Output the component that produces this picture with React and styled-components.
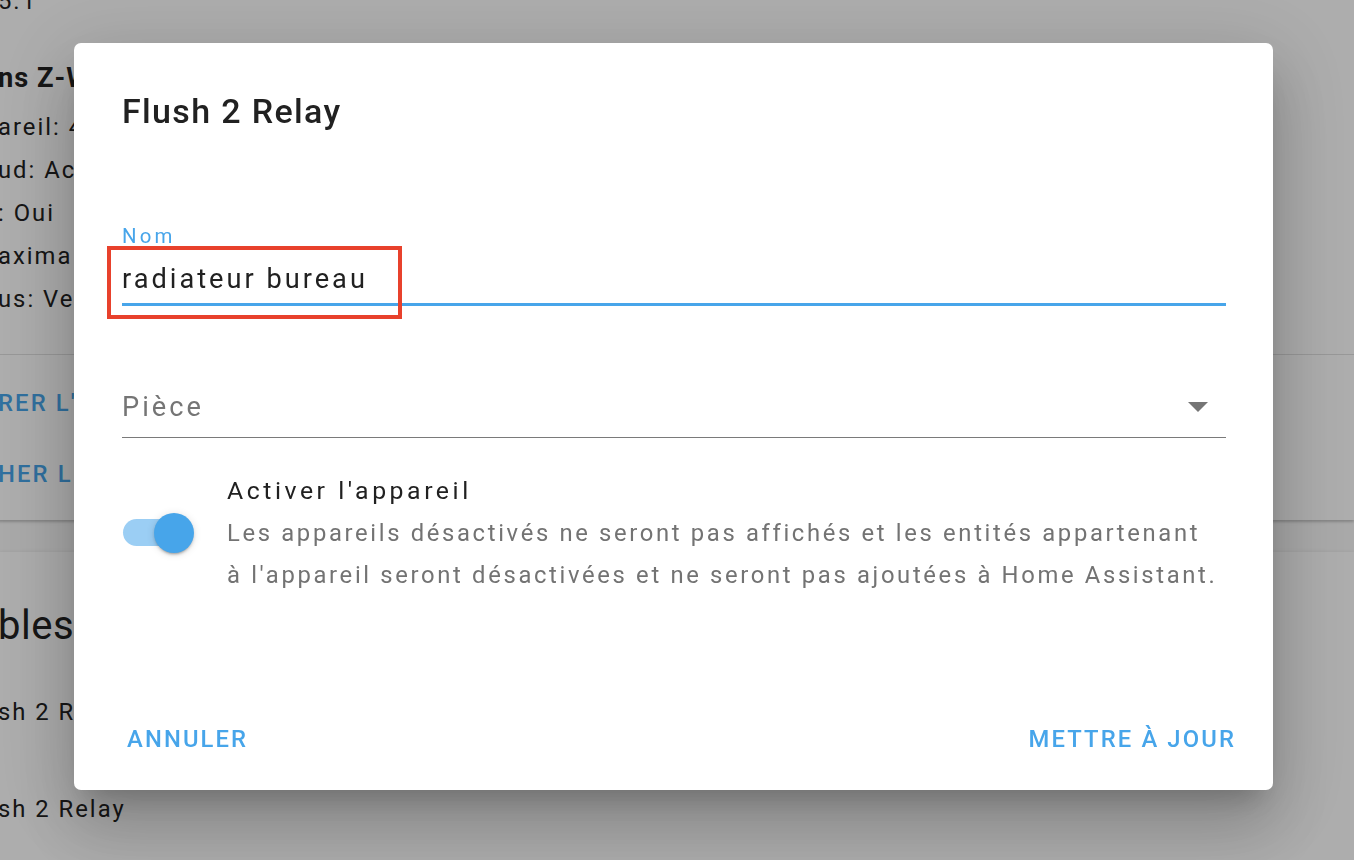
import React from "react";
import styled, { createGlobalStyle } from "styled-components";

const GlobalStyle = createGlobalStyle`
  html, body { margin: 0; padding: 0; }
  body {
    width: 1354px;
    height: 860px;
    overflow: hidden;
    background: #fafafa;
    font-family: Roboto, "Liberation Sans", Arial, sans-serif;
    -webkit-font-smoothing: antialiased;
  }
`;

const BLUE = "#47a5ea";

/* ---------- background page ---------- */
const Page = styled.div`
  display: flex;
  flex-direction: column;
  gap: 32px;
  height: 880px;
  margin-top: -20px;
  margin-left: -2px;
`;

const Card = styled.section`
  background: #ffffff;
  display: flex;
  flex-direction: column;
  flex: ${(p) => (p.$grow ? 1 : "none")};
  box-shadow: 0 2px 2px rgba(0, 0, 0, 0.14), 0 1px 5px rgba(0, 0, 0, 0.12);
`;

const CardBody = styled.div`
  display: flex;
  flex-direction: column;
  padding: ${(p) => p.$pad || "0"};
`;

const BgLine = styled.div`
  font-size: ${(p) => p.$size || "23.8px"};
  font-weight: ${(p) => (p.$bold ? 700 : 400)};
  line-height: ${(p) => p.$lh || "43px"};
  letter-spacing: ${(p) => p.$ls || "2px"};
  color: #212121;
  white-space: nowrap;
  margin-top: ${(p) => p.$mt || "0"};
`;

const CardActions = styled.div`
  display: flex;
  flex-direction: column;
  gap: 35px;
  border-top: 1px solid #e0e0e0;
  margin-top: 33px;
  padding: 30px 0 28px 0;
`;

const BgButton = styled.div`
  font-size: 23.8px;
  line-height: 36px;
  font-weight: 500;
  letter-spacing: 0.089em;
  color: ${BLUE};
  white-space: nowrap;
`;

/* ---------- overlay + dialog ---------- */
const Overlay = styled.div`
  position: fixed;
  inset: 0;
  background: rgba(0, 0, 0, 0.32);
  display: flex;
  align-items: flex-start;
  padding: 43px 81px 70px 74px;
  box-sizing: border-box;
`;

const Dialog = styled.div`
  width: 1199px;
  height: 747px;
  background: #ffffff;
  border-radius: 7px;
  display: flex;
  flex-direction: column;
  box-shadow: 0 19px 26px -12px rgba(0, 0, 0, 0.2),
    0 40px 64px 5px rgba(0, 0, 0, 0.14), 0 15px 78px 14px rgba(0, 0, 0, 0.12);
`;

const Title = styled.h2`
  margin: 0;
  padding: 48px 48px 0 48px;
  font-size: 34px;
  line-height: 40px;
  font-weight: 500;
  letter-spacing: 1.35px;
  color: #212121;
`;

const Content = styled.div`
  display: flex;
  flex-direction: column;
  padding: 0 47px 0 48px;
`;

const TextField = styled.div`
  position: relative;
  margin-top: 93px;
  display: flex;
  flex-direction: column;
  border-bottom: 3px solid ${BLUE};
`;

const FloatLabel = styled.div`
  font-size: 20.4px;
  line-height: 24px;
  color: ${BLUE};
  letter-spacing: 3.1px;
`;

const InputValue = styled.div`
  margin-top: 14px;
  margin-bottom: 7px;
  font-size: 27.2px;
  line-height: 34px;
  color: #212121;
  letter-spacing: 3px;
`;

const Highlight = styled.div`
  position: absolute;
  left: -15px;
  top: 22px;
  width: 295px;
  height: 73px;
  box-sizing: border-box;
  border: 4px solid #e8412c;
  pointer-events: none;
`;

const SelectField = styled.div`
  margin-top: 84px;
  display: flex;
  align-items: center;
  justify-content: space-between;
  padding-bottom: 13px;
  border-bottom: 1px solid #7a7a7a;
`;

const Placeholder = styled.div`
  font-size: 27.2px;
  line-height: 34px;
  color: #757575;
  letter-spacing: 3px;
`;

const Caret = styled.span`
  width: 0;
  height: 0;
  margin-right: 18px;
  border-left: 10px solid transparent;
  border-right: 10px solid transparent;
  border-top: 10px solid #757575;
`;

const SwitchRow = styled.div`
  margin-top: 32px;
  display: flex;
  align-items: center;
  gap: 33px;
`;

const Switch = styled.div`
  position: relative;
  width: 72px;
  height: 40px;
  flex: none;
`;

const Track = styled.div`
  position: absolute;
  left: 1px;
  top: 6px;
  width: 65px;
  height: 27px;
  border-radius: 14px;
  background: ${BLUE};
  opacity: 0.54;
`;

const Thumb = styled.div`
  position: absolute;
  left: 32px;
  top: 0;
  width: 40px;
  height: 40px;
  border-radius: 50%;
  background: ${BLUE};
  box-shadow: 0 3px 2px -2px rgba(0, 0, 0, 0.2), 0 2px 3px 0 rgba(0, 0, 0, 0.14),
    0 1px 8px 0 rgba(0, 0, 0, 0.12);
`;

const SwitchText = styled.div`
  display: flex;
  flex-direction: column;
`;

const SwitchLabel = styled.div`
  font-size: 24.8px;
  line-height: 42px;
  color: #212121;
  letter-spacing: 3.55px;
`;

const SwitchDesc = styled.div`
  font-size: 23.8px;
  line-height: 42px;
  color: #737373;
  letter-spacing: 2.66px;
  white-space: nowrap;
`;

const Actions = styled.div`
  margin-top: auto;
  display: flex;
  justify-content: space-between;
  padding: 0 37px 33px 53px;
`;

const ActionButton = styled.button`
  border: none;
  background: none;
  padding: 0;
  font-family: inherit;
  font-size: 23.8px;
  line-height: 36px;
  font-weight: 500;
  letter-spacing: 0.089em;
  color: ${BLUE};
  cursor: pointer;
`;

export default function App() {
  return (
    <>
      <GlobalStyle />
      <Page>
        <Card>
          <CardBody>
            <BgLine>5.1</BgLine>
            <BgLine $bold $size="27.2px" $ls="1px" $mt="34px">ns Z-W</BgLine>
            <BgLine $mt="6px">areil: 4</BgLine>
            <BgLine>ud: Ac</BgLine>
            <BgLine>: Oui</BgLine>
            <BgLine>axima</BgLine>
            <BgLine>us: Ver</BgLine>
          </CardBody>
          <CardActions>
            <BgButton>RER L'</BgButton>
            <BgButton>HER LE</BgButton>
          </CardActions>
        </Card>
        <Card $grow>
          <CardBody $pad="50px 0 0 0">
            <BgLine $size="40px" $lh="48px" $ls="0.5px">bles</BgLine>
            <BgLine $mt="41px">sh 2 R</BgLine>
            <BgLine $mt="54px">sh 2 Relay</BgLine>
          </CardBody>
        </Card>
      </Page>
      <Overlay>
        <Dialog role="dialog">
          <Title>Flush 2 Relay</Title>
          <Content>
            <TextField>
              <FloatLabel>Nom</FloatLabel>
              <InputValue>radiateur bureau</InputValue>
              <Highlight />
            </TextField>
            <SelectField>
              <Placeholder>Pièce</Placeholder>
              <Caret />
            </SelectField>
            <SwitchRow>
              <Switch>
                <Track />
                <Thumb />
              </Switch>
              <SwitchText>
                <SwitchLabel>Activer l'appareil</SwitchLabel>
                <SwitchDesc>
                  Les appareils désactivés ne seront pas affichés et les entités appartenant
                  <br />à l'appareil seront désactivées et ne seront pas ajoutées à Home Assistant.
                </SwitchDesc>
              </SwitchText>
            </SwitchRow>
          </Content>
          <Actions>
            <ActionButton>ANNULER</ActionButton>
            <ActionButton>METTRE À JOUR</ActionButton>
          </Actions>
        </Dialog>
      </Overlay>
    </>
  );
}
